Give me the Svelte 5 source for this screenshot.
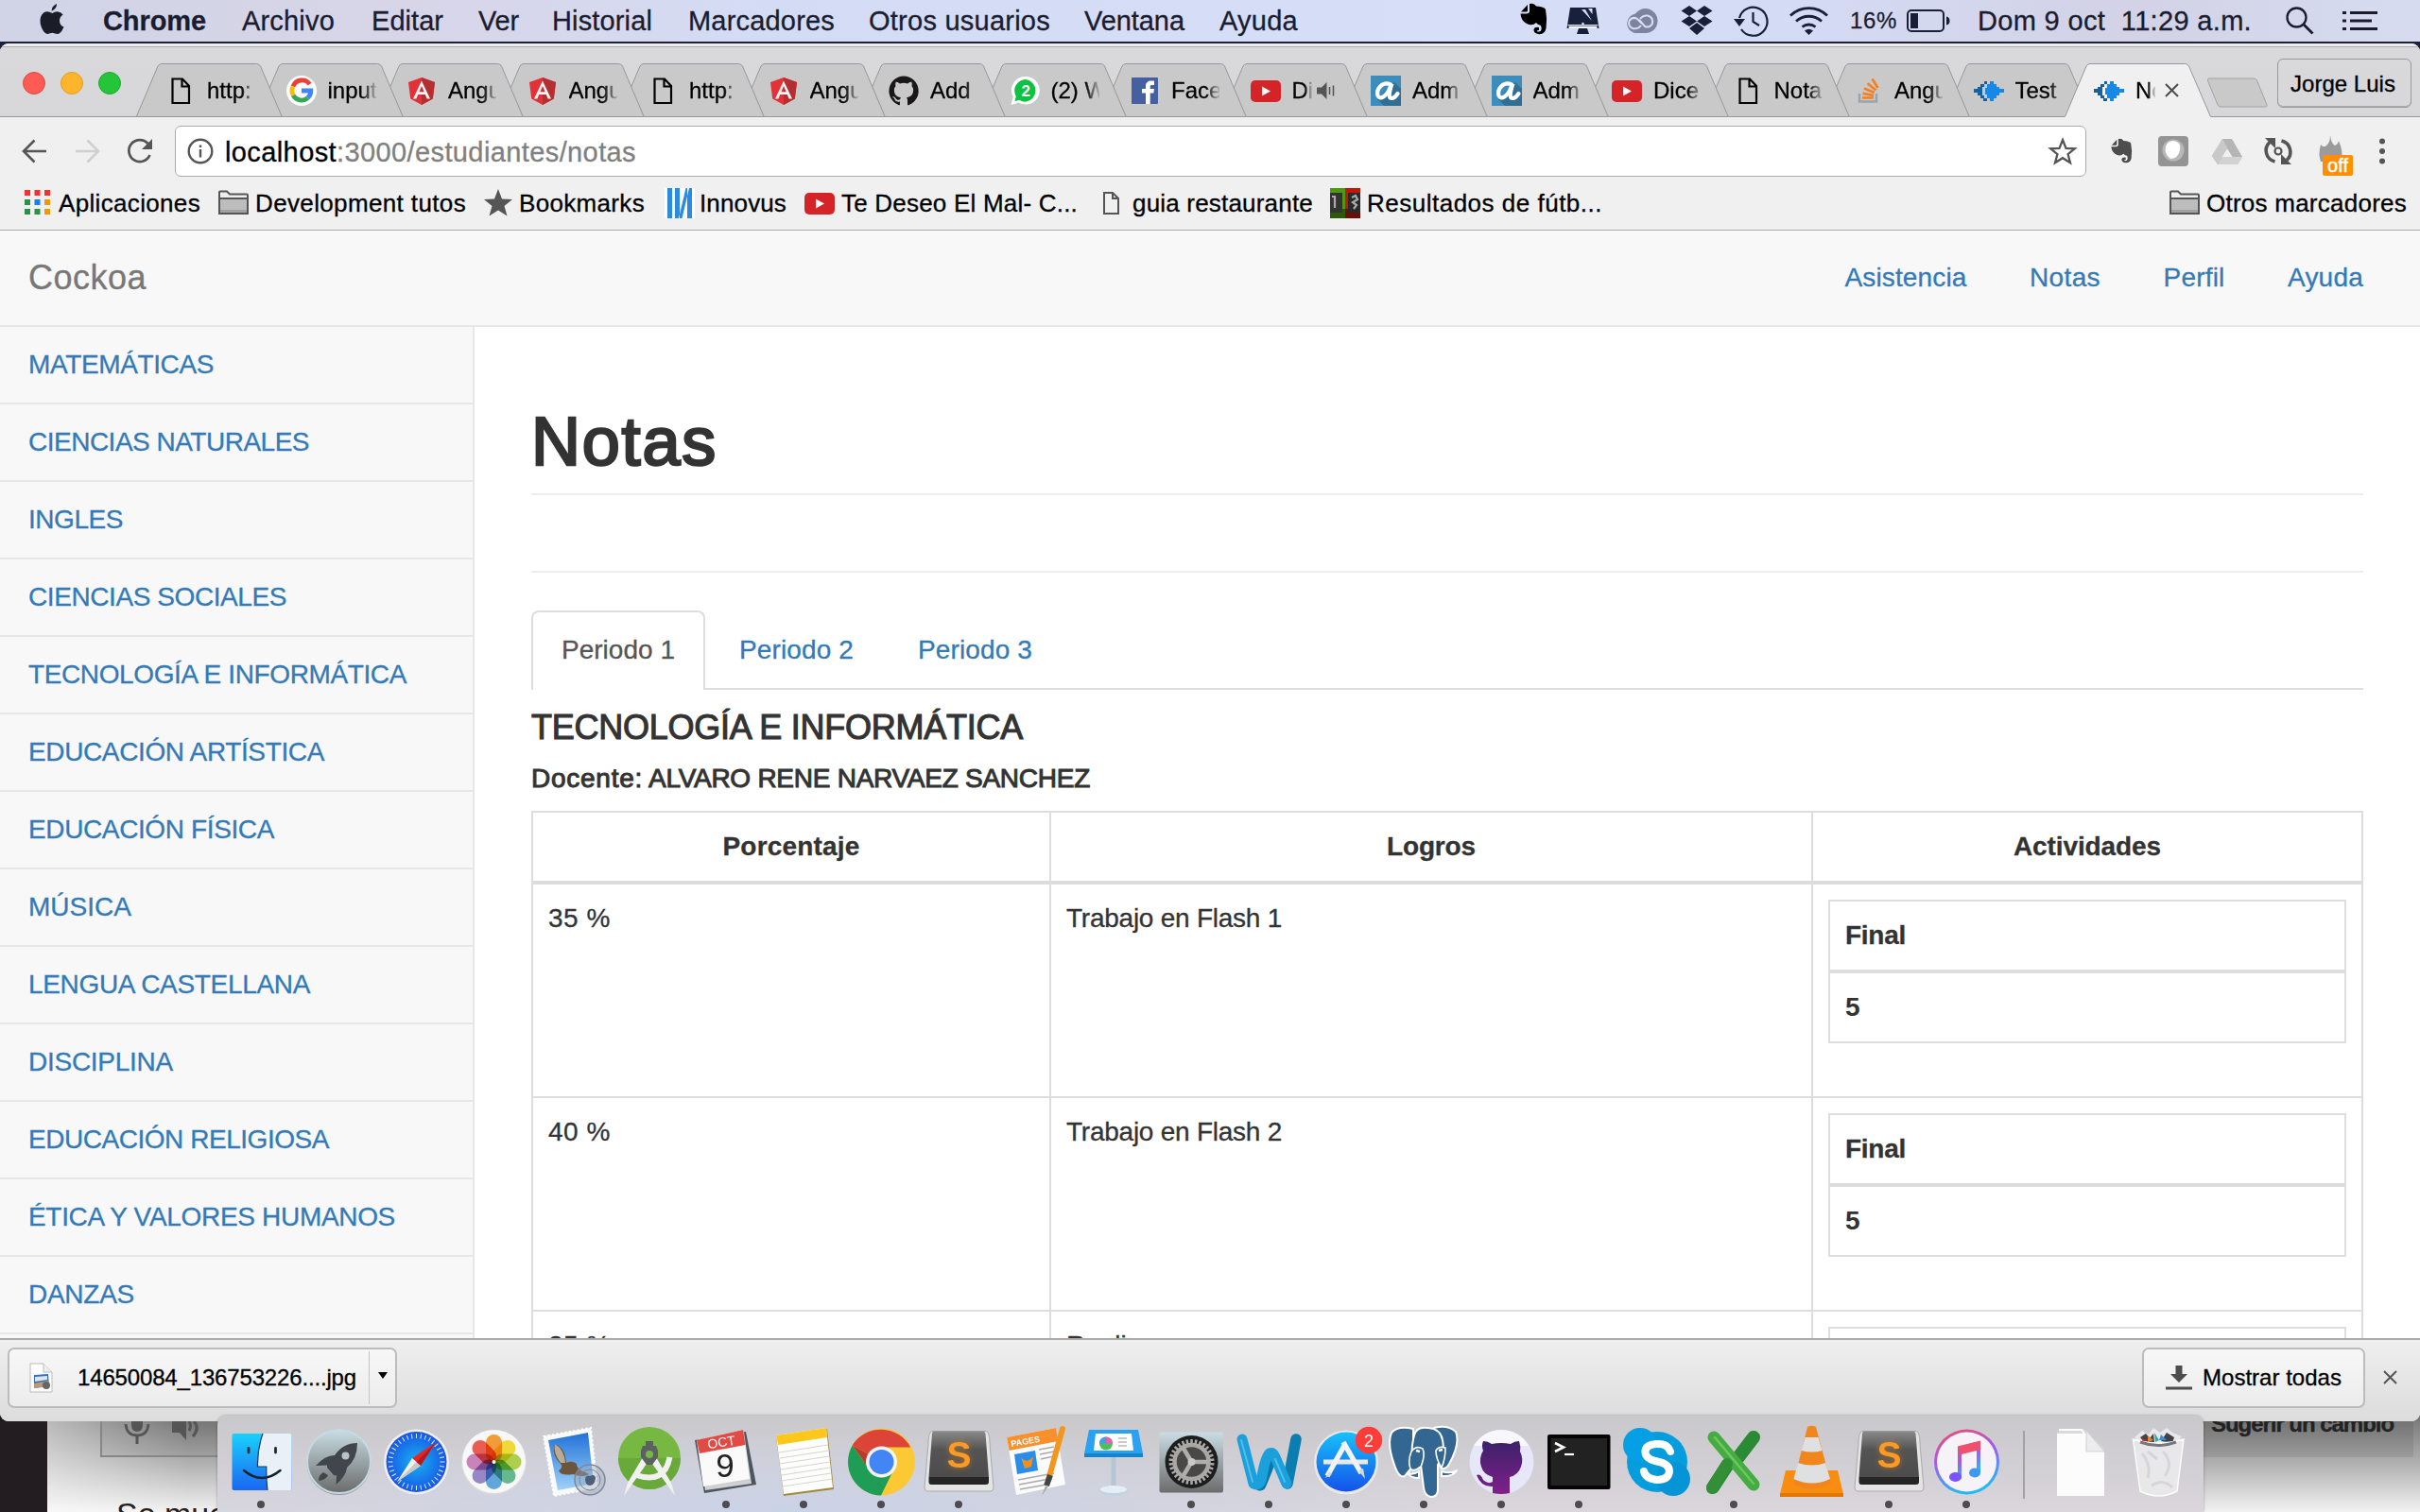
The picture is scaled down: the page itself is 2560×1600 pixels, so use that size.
<script>
  // Spreads the letters of a label so that it fills the given width.
  function fit(node, width) {
    const natural = node.getBoundingClientRect().width;
    const n = node.textContent.length;
    if (width && n) node.style.letterSpacing = `${((width - natural) / n).toFixed(3)}px`;
  }

  const menus = [
    ['Archivo', 98], ['Editar', 76], ['Ver', 43], ['Historial', 106], ['Marcadores', 155],
    ['Otros usuarios', 192], ['Ventana', 106], ['Ayuda', 83]
  ];

  const tabs = [
    ['page', 'http:'], ['google', 'input'], ['angular', 'Angul'], ['angular', 'Angul'], ['page', 'http:'],
    ['angular', 'Angul'], ['github', 'Add'], ['whatsapp', '(2) W'], ['facebook', 'Face'], ['youtube', 'Di'],
    ['adm', 'Adm'], ['adm', 'Adm'], ['youtube', 'Dice'], ['page', 'Nota'], ['stack', 'Angul'],
    ['test', 'Test'], ['test', 'No']
  ];

  const bookmarks = [
    ['apps', 'Aplicaciones', 150], ['folder', 'Development tutos', 223], ['star', 'Bookmarks', 133],
    ['innovus', 'Innovus', 92], ['youtube', 'Te Deseo El Mal- C...', 250], ['doc', 'guia restaurante', 191],
    ['futbol', 'Resultados de fútb...', 249]
  ];

  const subjects = [
    ['MATEMÁTICAS', 196], ['CIENCIAS NATURALES', 297], ['INGLES', 100], ['CIENCIAS SOCIALES', 273],
    ['TECNOLOGÍA E INFORMÁTICA', 400], ['EDUCACIÓN ARTÍSTICA', 313], ['EDUCACIÓN FÍSICA', 260],
    ['MÚSICA', 109], ['LENGUA CASTELLANA', 298], ['DISCIPLINA', 153], ['EDUCACIÓN RELIGIOSA', 318],
    ['ÉTICA Y VALORES HUMANOS', 388], ['DANZAS', 112], ['', 0]
  ];

  const links = [['Asistencia', 129], ['Notas', 75], ['Perfil', 65], ['Ayuda', 80]];

  const rows = [
    ['35 %', 'Trabajo en Flash 1', 228], ['40 %', 'Trabajo en Flash 2', 228], ['25 %', 'Realiza', 0]
  ];

  const apps = [
    ['finder', 1], ['launchpad', 0], ['safari', 0], ['photos', 0], ['mail', 0], ['studio', 0],
    ['calendar', 1], ['notes', 1], ['chrome', 1], ['sublime', 1], ['pages', 0], ['keynote', 0],
    ['prefs', 1], ['word', 1], ['appstore', 1], ['postgres', 1], ['octocat', 1], ['terminal', 1],
    ['skype', 0], ['excel', 1], ['vlc', 0], ['sublime', 1], ['itunes', 1]
  ];

  const petals = ['#f7941e', '#f4dc1c', '#a9cf38', '#55b582', '#4f9fdc', '#8d7cc4', '#c778b8', '#ee4b3c'];
  const spokes = Array.from({ length: 36 }, (_, i) => i * 10);
  const teeth = Array.from({ length: 30 }, (_, i) => i * 12);
</script>

{#snippet favicon(name)}
  <svg class="fav" viewBox="0 0 32 32">
    {#if name === 'page'}
      <path d="M7.5 3.5H18L25 11V29H7.5ZM17.5 4V11.500H25" fill="none" stroke="#000" stroke-width="2.200" />
    {:else if name === 'google'}
      <circle cx="16" cy="16" r="16" fill="#fff" />
      <g fill="none" stroke-width="4.800">
        <path d="M24.600 9.200A10 10 0 0 0 7 11.500" stroke="#ea4335" />
        <path d="M7 11.500A10 10 0 0 0 7.200 20.800" stroke="#fbbc05" />
        <path d="M7.200 20.800A10 10 0 0 0 22.500 23.600" stroke="#34a853" />
        <path d="M22.500 23.600A10 10 0 0 0 25.800 16H16" stroke="#4285f4" />
      </g>
    {:else if name === 'angular'}
      <path d="M16 2L30 7L27.800 24.500L16 31L4.200 24.500L2 7Z" fill="#e23237" />
      <path d="M16 2L30 7L27.800 24.500L16 31Z" fill="#b52e31" />
      <path d="M16 5.500L25 24.500H21.600L19.800 20H12.200L10.400 24.500H7ZM16 11L13.400 17.200H18.600Z" fill="#f2f2f2" fill-rule="evenodd" />
    {:else if name === 'github'}
      <path d="M16 .5A15.800 15.800 0 0 0 11 31.200C11.800 31.300 12 30.800 12 30.400V27.500C7.600 28.500 6.700 25.600 6.700 25.600C6 23.800 4.900 23.300 4.900 23.300C3.500 22.300 5 22.300 5 22.300C6.600 22.400 7.500 24 7.500 24C8.900 26.500 11.200 25.800 12.100 25.300C12.200 24.300 12.700 23.600 13.100 23.200C9.600 22.800 5.900 21.400 5.900 15.300C5.900 13.500 6.500 12.100 7.500 11C7.400 10.600 6.800 9 7.700 6.800C7.700 6.800 9.100 6.400 12 8.400A15 15 0 0 1 20 8.400C22.900 6.400 24.300 6.800 24.300 6.800C25.200 9 24.600 10.600 24.500 11C25.500 12.100 26.100 13.500 26.100 15.300C26.100 21.400 22.400 22.800 18.900 23.200C19.500 23.700 20 24.700 20 26.200V30.400C20 30.800 20.300 31.300 21.100 31.200A15.800 15.800 0 0 0 16 .5Z" fill="#191717" />
    {:else if name === 'whatsapp'}
      <path d="M17 1A14.500 14.500 0 0 1 17 30.500Q13 30.500 9.500 28.500L1.500 31L3.800 22.500A14.500 14.500 0 0 1 17 1Z" fill="#fff" />
      <path d="M17 4A12 12 0 0 1 17 27.800Q13 27.800 10 25.800L5.500 27.200L6.800 22A12 12 0 0 1 17 4Z" fill="#0dc143" />
      <text x="17.200" y="22" text-anchor="middle" class="bold" font-size="17" fill="#fff">2</text>
    {:else if name === 'facebook'}
      <rect x="2" y="2" width="28" height="28" rx="1" fill="#4460a0" />
      <path d="M17 30V18.500H13V14H17V11C17 7.500 19.500 5.600 23 5.600H26V10H24C22.300 10 21.700 10.600 21.700 12V14H26L25.300 18.500H21.700V30Z" fill="#fff" />
    {:else if name === 'youtube'}
      <rect x="0" y="5" width="32" height="23" rx="5" fill="#d42428" />
      <path d="M12 11.500L21 16.500L12 21.500Z" fill="#fff" />
    {:else if name === 'adm'}
      <rect width="32" height="32" fill="#3c8dbc" />
      <path d="M25 7L32 14V32H14L7 25Z" fill="#2f6f94" />
      <path d="M21 9.500C12 5.500 5.500 15 7.500 21C9.500 26.500 17 22 20.500 12.500L22.500 8.500C20.500 14 18 23.500 21.500 24C24.500 24.300 26.500 22 28.500 19" fill="none" stroke="#fff" stroke-width="4.200" stroke-linecap="round" />
    {:else if name === 'stack'}
      <path d="M7 19V27.500H25V19" fill="none" stroke="#9ba3ab" stroke-width="2.500" />
      <path d="M10 23.500H22M10.500 18.800L22 21M12 13.500L22.700 18M15.500 8.200L24.500 15.500M20.500 3.500L26.500 13" fill="none" stroke="#f48024" stroke-width="2.700" />
    {:else if name === 'test'}
      <path d="M17 6H21V9H24V12H27V14H32V18H27V21H24V24H21V27H17V24H14V20H12V13H14V9H17Z" fill="#1588e8" />
      <path d="M11 6H14V9H11V12H9V21H11V24H14V27H10V24H7V21H4V18H0V14H4V12H7V9H11Z" fill="#15609e" />
    {:else if name === 'apps'}
      <g>
        <path d="M1 2H7V8H1ZM11.500 2H17.500V8H11.500ZM22 2H28V8H22Z" fill="#f92f2f" />
        <path d="M1 12H7V18H1ZM1 22H7V28H1ZM11.500 22H17.500V28H11.500Z" fill="#2b9348" />
        <path d="M11.500 12H17.500V18H11.500Z" fill="#1a7cff" />
        <path d="M22 12H28V18H22ZM22 22H28V28H22Z" fill="#f29900" />
      </g>
    {:else if name === 'folder'}
      <path d="M1 27V4.500Q1 3.500 2 3.500H9L12 6.500H30Q31 6.500 31 7.500V27Z" fill="#eee" stroke="#555" stroke-width="2" />
      <path d="M1 11H31V27H1Z" fill="#bdbdbd" stroke="#555" stroke-width="2" />
      <path d="M2 23H30V26H2Z" fill="#a2a2a2" />
    {:else if name === 'star'}
      <path d="M15 1L19 11.500L30 12L21.500 19L24.500 29.500L15 23.500L5.500 29.500L8.500 19L0 12L11 11.500Z" fill="#555" />
    {:else if name === 'innovus'}
      <rect width="32" height="32" fill="#fff" />
      <path d="M3 0H8V32H3ZM11 0H16V32H11ZM24 0H29V32H24ZM15 32H18.500L26 0H22.500Z" fill="#2b8be0" />
    {:else if name === 'doc'}
      <path d="M2 5H11L17 11V27H2ZM11 5V11H17" fill="none" stroke="#555" stroke-width="2" />
    {:else if name === 'futbol'}
      <rect width="16" height="32" fill="#4c9a10" /><rect x="16" width="16" height="32" fill="#c0180c" />
      <rect y="22" width="16" height="10" fill="#2c5a08" /><rect x="16" y="22" width="16" height="10" fill="#6a0e08" />
      <rect y="5" width="13" height="21" fill="#333" /><rect x="19" y="5" width="13" height="21" fill="#2a2a2a" />
      <path d="M2 9H5V21M23 10L27 8L29 12L24 15L28 18L25 22" stroke="#aaa" stroke-width="2.200" fill="none" />
    {/if}
  </svg>
{/snippet}

{#snippet app(name)}
  <svg class="app" viewBox="0 0 82 84">
    {#if name === 'finder'}
      <rect x="10.500" y="13" width="63" height="60" rx="2" fill="url(#finderBlue)" />
      <path d="M43 13H72Q73.500 13 73.500 15V71Q73.500 73 72 73H48Q46.500 62 46.800 48H37.500Q37 30 43 13Z" fill="#e9f0f7" />
      <path d="M28 28.500V33M56.500 28.500V33" stroke="#1b2a3c" stroke-width="2.800" stroke-linecap="round" />
      <path d="M23 52Q42 68 61.500 52" fill="none" stroke="#12202e" stroke-width="2.500" stroke-linecap="round" />
      <path d="M43 13Q37 30 37.500 48H46.800Q46.500 62 48 73" fill="none" stroke="#1c3a5c" stroke-width="1.200" />
    {:else if name === 'launchpad'}
      <circle cx="41.500" cy="44" r="34" fill="#8e9698" /><circle cx="41.500" cy="42.500" r="33.500" fill="url(#steel)" stroke="#c4dbe2" stroke-width="2" />
      <path d="M61 23Q46 23 37 36Q27 36 17 47L29 46.500L29 49L36 57L39 57.500L38.500 67Q49 58 50 49Q61 40 61 23Z" fill="#40464b" />
      <circle cx="48.500" cy="36.500" r="4" fill="#b7c3c7" />
      <path d="M25 54Q19 58 20.500 63Q28 62 30 57Z" fill="#40464b" />
    {:else if name === 'safari'}
      <circle cx="41.500" cy="43" r="34.500" fill="#f1f1f3" /><circle cx="41.500" cy="43" r="32" fill="url(#ocean)" />
      {#each spokes as a (a)}<path d="M41.500 13V18" stroke="#d8eefc" stroke-width="1" transform="rotate({a} 41.500 43)" />{/each}
      <path d="M62 22L46 47L37 39Z" fill="#e8262a" /><path d="M21 64L46 47L37 39Z" fill="#f0f0f0" />
      <path d="M21 64L46 47L41.500 43Z" fill="#c8c8c8" /><path d="M62 22L46 47L41.500 43Z" fill="#b51a20" />
    {:else if name === 'photos'}
      <circle cx="41.500" cy="43.500" r="34.500" fill="#d9d9dc" /><circle cx="41.500" cy="42.500" r="33.500" fill="#f8f8f8" />
      {#each petals as c, i (i)}<rect class="petal" x="33" y="14" width="17" height="29" rx="8.500" fill={c} opacity=".88" transform="rotate({i * 45} 41.500 43)" />{/each}
      <circle cx="41.500" cy="43" r="2" fill="#fff" />
    {:else if name === 'mail'}
      <path d="M12 16L62 7L69 70L23 79Z" fill="#fafafa" stroke="#fff" stroke-width="2" stroke-dasharray="2.500 2" />
      <path d="M17 20L59 12L65 66L27 73Z" fill="url(#sky)" />
      <path d="M24 24Q35 28 36 44Q42 41 47 45Q46 50 56 54L60 56Q54 60 43 56Q30 58 28 52Q32 50 31 46Q20 36 24 24Z" fill="#6d553b" />
      <path d="M24 24Q34 30 35 44L30 44Q22 34 24 24Z" fill="#b9ab98" />
      <circle cx="61" cy="62" r="16" fill="#9fa8b866" stroke="#7f8794" stroke-width="1.500" /><circle cx="61" cy="62" r="11" fill="none" stroke="#7f8794" />
      <path d="M61 58Q66 55 67 60Q66 68 61 68Q56 68 56 61Q57 56 61 58Z" fill="#4e6078" />
    {:else if name === 'studio'}
      <circle cx="42" cy="39" r="33" fill="#77b843" /><path d="M9 39A33 33 0 0 0 75 39Z" fill="#69a93a" />
      <path d="M39 45L22 69L15 79L19 65L35 38ZM45 45L62 69L69 79L65 65L49 38Z" fill="#f1f1f1" />
      <path d="M28 57Q58 67 63.500 38" fill="none" stroke="#f1f1f1" stroke-width="6" />
      <path d="M38 21H46V26H49L51 31V38L45 46H39L33 38V31L35 26H38Z" fill="#5c6063" /><circle cx="42" cy="35" r="4" fill="#77b843" />
    {:else if name === 'calendar'}
      <path d="M8 20L62 11L73 67L18 76Z" fill="#4d565f" /><path d="M11 22L60 12L68 66L19 73Z" fill="#d0d0d0" />
      <path d="M10 20L59 9L66 61L17 69Z" fill="#fafafa" /><path d="M10 20L59 9L61.500 25L13 34Z" fill="#e24a45" />
      <text x="36" y="27" text-anchor="middle" font-size="14" fill="#fff" transform="rotate(-9 36 22)">OCT</text>
      <text x="40" y="59" text-anchor="middle" font-size="35" fill="#222">9</text>
    {:else if name === 'notes'}
      <path d="M12 16L66 8L73 72L20 79Z" fill="#a08a3a" /><path d="M12 15L65 7L72 70L20 77Z" fill="#fdfdfb" />
      <path d="M12 15L65 7L66 17L14 25Z" fill="#fdc71c" />
      <path d="M15 33L67 25M16 39L68 31M16 45L68 37M17 51L69 43M18 57L69 49M18 63L70 55M19 69L71 61" stroke="#d5d5d5" stroke-width="1.200" />
    {:else if name === 'chrome'}
      <circle cx="41.500" cy="43" r="35.500" fill="#fcc934" />
      <path d="M41.500 43L10.800 25.200A35.500 35.500 0 0 1 72.200 27.500L41.500 27.500Z" fill="#db4437" />
      <path d="M10.800 25.200A35.500 35.500 0 0 0 41 78.500L54.500 51L28.500 51Z" fill="#1f9d57" />
      <path d="M10.800 25.200L28.500 51L41.500 43Z" fill="#b93a2f" />
      <circle cx="41.500" cy="43" r="16.500" fill="#f5f5f5" /><circle cx="41.500" cy="43" r="13" fill="#4285f4" />
    {:else if name === 'sublime'}
      <path d="M9 24Q9 11 13 10.500H70Q74 11 74 24L78 70Q78 74 75 74H8Q5 74 5 70Z" fill="#e4e4e4" stroke="#aaa" />
      <path d="M13 13Q13 10.500 15 10.500H67Q69 10.500 69.500 13L73 59H9.500Z" fill="url(#slate)" />
      <path d="M9.500 59H73V64Q73 67 70 67H12Q9.500 67 9.500 64Z" fill="#252525" />
      <text x="41.500" y="49" text-anchor="middle" class="bold glow" font-size="39" fill="#fb9a24">S</text>
    {:else if name === 'pages'}
      <path d="M10 17L62 7L72 67L20 78Z" fill="#fbfbfb" /><path d="M10 17L62 7L64.500 21L12.500 31Z" fill="#f8902e" />
      <text x="15" y="27" class="bold" font-size="9" fill="#fff" transform="rotate(-10 15 27)">PAGES</text>
      <path d="M18 35L40 31L43 52L21 56Z" fill="#2a8ceb" /><path d="M25 38Q31 46 38 37L36 48L29 50Z" fill="#f4901a" />
      <path d="M44 30L60 27M45 35L60 32M46 40L60 37M22 62L60 55M23 67L55 61M24 72L52 67" stroke="#aaa" stroke-width="1.400" />
      <path d="M69 8L54 62" stroke="#f2961e" stroke-width="6" stroke-linecap="round" /><path d="M56 57L52 68" stroke="#444" stroke-width="6" /><path d="M51 68L47 79L54 69Z" fill="#aaa" />
    {:else if name === 'keynote'}
      <path d="M38.500 37H43.500V72H38.500Z" fill="#b7c6d4" /><ellipse cx="41" cy="73.500" rx="15" ry="5.500" fill="#c3d3e2" /><ellipse cx="41" cy="72" rx="14" ry="4" fill="#e6eef5" />
      <path d="M15 9H67L72 34H10Z" fill="#2aa1f2" /><path d="M10 34H72V38H10Z" fill="#1684cc" />
      <path d="M22 13H60L62 31H20Z" fill="#fff" /><circle cx="33" cy="23.500" r="7" fill="#4bc05a" /><path d="M33 23.500V16.500A7 7 0 0 1 40 23.500Z" fill="#ef5da8" /><path d="M33 23.500H26A7 7 0 0 1 33 16.500Z" fill="#3aa0ee" />
      <path d="M46 18H55M46 22H55M46 26H55" stroke="#b9b9b9" stroke-width="1.500" />
    {:else if name === 'prefs'}
      <rect x="7.500" y="11.500" width="67.500" height="64" rx="2" fill="url(#steel)" />
      <circle cx="41.500" cy="43" r="28" fill="#1d1d1d" />
      {#each teeth as a (a)}<path d="M41.500 19V25" stroke="#aaa" stroke-width="2.500" transform="rotate({a} 41.500 43)" />{/each}
      <circle cx="41.500" cy="43" r="18" fill="#4a4846" stroke="#aaa8a5" stroke-width="4.500" />
      <path d="M41.500 43H59M41.500 43L32.500 28M41.500 43L32.500 58" stroke="#b0aeab" stroke-width="4.500" /><circle cx="41.500" cy="43" r="4" fill="#c9c9c9" />
    {:else if name === 'word'}
      <path d="M43 39Q38 53 32 67" stroke="#0a76a8" stroke-width="13" stroke-linecap="round" fill="none" />
      <path d="M70 19L61 66" stroke="#0b7db0" stroke-width="11.500" stroke-linecap="round" />
      <path d="M13 19L25 66Q32 70 34 58Q38 36 42 34Q46 32 48 38L60 66" stroke="#1ba0dc" stroke-width="11" stroke-linecap="round" stroke-linejoin="round" fill="none" />
      <path d="M12 20L24 64M48 40L58 64" stroke="#52bdee" stroke-width="2" stroke-linecap="round" />
    {:else if name === 'appstore'}
      <circle cx="41" cy="43.500" r="34" fill="#e9e9ec" /><circle cx="41" cy="43" r="31.500" fill="url(#store)" />
      <path d="M17 43H64" stroke="#e9e9ec" stroke-width="5" /><path d="M40 24L21 58" stroke="#f3f3f3" stroke-width="5.500" /><path d="M38 22L57 55" stroke="#f3f3f3" stroke-width="5.500" />
      <path d="M23 53L19 60L26 56ZM54 52L61 61L59 50Z" fill="#d7d7d7" />
      <circle cx="65" cy="20" r="14.200" fill="#fc3d39" /><text x="65" y="26.500" text-anchor="middle" font-size="18" fill="#fff">2</text>
    {:else if name === 'postgres'}
      <g fill="#336791" stroke="#fff" stroke-width="2" stroke-linejoin="round">
        <path d="M30 8Q14 4 7 12Q2 24 10 46Q15 61 21 58L30 47Z" />
        <path d="M52 7Q66 3 75 11Q80 24 68 45Q65 51 60 50L52 38Z" />
        <path d="M60 53Q70 56 76 52Q72 59 60 58Z" /><path d="M36 53Q30 57 24 55Q27 60 36 60Z" />
        <path d="M31 15Q33 5 46 7Q59 8 61 20Q64 34 56 46V72Q56 80 49 80Q42 79 41 70L38 46Q24 42 31 15Z" />
        <path d="M28 32Q33 25 40 29Q43 36 38 48Q30 54 27 50Q24 42 28 32ZM64 28Q57 26 54 31Q54 40 60 49Q64 40 64 28Z" stroke-width="1.600" />
      </g>
      <path d="M33 31L37 32M57 31L61 30" stroke="#fff" stroke-width="2.500" />
    {:else if name === 'octocat'}
      <circle cx="41.500" cy="43" r="34" fill="#e6e8fa" /><path d="M41.500 9A34 34 0 0 1 70 26H12A34 34 0 0 1 41.500 9Z" fill="#f7f7fd" />
      <path d="M22 21Q27 21 31 24Q41 22 51 24Q55 21 60 21Q62 27 61 32Q65 40 62 48Q59 57 50 59V76Q41 78 32 76V69Q20 70 15 57Q19 55 22 62Q27 67 32 64V59Q22 56 20 48Q17 39 22 31Q20 26 22 21Z" fill="url(#plum)" />
    {:else if name === 'terminal'}
      <rect x="8" y="14" width="66.500" height="58" rx="2" fill="#050505" /><rect x="11.500" y="18" width="59.500" height="50" fill="#222" />
      <path d="M16 23L25 27.500L16 32" fill="none" stroke="#fff" stroke-width="2.600" /><path d="M26 35H36" stroke="#fff" stroke-width="2.200" />
    {:else if name === 'skype'}
      <circle cx="42" cy="43" r="32" fill="#069ddd" /><circle cx="24" cy="25" r="18" fill="#049fe4" /><circle cx="59" cy="61" r="18" fill="#0595d6" />
      <path d="M56 32Q53 23 41 24Q29 25 29.500 33Q30 40 42 42.500Q55 45 55 53Q54 62 42 62Q30 61 28 53" fill="none" stroke="#fff" stroke-width="8" stroke-linecap="round" />
    {:else if name === 'excel'}
      <path d="M62 17L46 38M34 47L19 70" stroke="#2b8a34" stroke-width="14" stroke-linecap="round" />
      <path d="M20 17L62 67" stroke="#46ab42" stroke-width="13" stroke-linecap="round" /><path d="M34 45L18 71" stroke="#328f35" stroke-width="12" stroke-linecap="round" />
      <path d="M21 17L62 66" stroke="#69c95f" stroke-width="2.500" stroke-linecap="round" />
    {:else if name === 'vlc'}
      <path d="M14 52H69L75 77V80H8V77Z" fill="#f98d10" /><path d="M8 76H75V80H8Z" fill="#e07706" />
      <path d="M37 6Q41 3.500 46 6L62 66Q42 77 22 66Z" fill="#f0861c" />
      <path d="M34.500 17H48.500L52.500 31Q42 34 30.500 31ZM27 44Q42 49 56 44L61 61Q42 70 22.500 61Z" fill="#dfe0e2" />
    {:else if name === 'itunes'}
      <circle cx="41.500" cy="43" r="34.500" fill="url(#tunes)" /><circle cx="41.500" cy="43" r="31.500" fill="#f6f3f8" />
      <path d="M34 60V28L54 23V54" fill="none" stroke="url(#tunes)" stroke-width="4" /><path d="M32 27L56 21V30L36 35Z" fill="#f0506e" />
      <ellipse cx="29.500" cy="59" rx="6.500" ry="5" fill="#7a54f5" /><ellipse cx="50" cy="54.500" rx="6" ry="5" fill="#3f98f0" />
    {:else if name === 'files'}
      <path d="M22 8H44L66 29V79H16V12Z" fill="#d9d9d9" /><path d="M16 13H47L66 33V79H16Z" fill="#fcfcfc" /><path d="M18 9H42L45 13" fill="none" stroke="#fff" stroke-width="2" />
      <path d="M47 10V32H66Z" fill="#ececec" stroke="#d2d2d2" />
    {:else if name === 'trash'}
      <path d="M16 17L24 10L31 14L36 7L43 12L50 7L56 12L66 16L60 24H22Z" fill="#e9e9ea" />
      <path d="M22 17L28 13L32 18L36 13L37 22H26ZM44 21L50 12L58 17L56 23Z" fill="#43434a" /><path d="M30 15L36 20L30 22Z" fill="#e9812f" /><path d="M44 14L50 20H42Z" fill="#3b8fd6" /><path d="M24 18L30 22H24Z" fill="#c83238" /><path d="M37 12L42 20L38 22Z" fill="#35a8a0" />
      <path d="M14.500 19Q41 27 68 19L61 74Q41 84 22 74Z" fill="#eaeaece0" stroke="#fbfbfb" stroke-width="1.500" />
      <path d="M22 22Q41 29 60 22" fill="none" stroke="#77777e" stroke-width="3" />
      <path d="M24 34Q34 46 30 60M46 32Q58 44 48 58M34 68Q46 60 56 70M30 32L40 40" stroke="#d6d6da" stroke-width="3" fill="none" />
    {/if}
  </svg>
{/snippet}

<svg class="defs" aria-hidden="true">
  <defs>
    <linearGradient id="finderBlue" x2="0" y2="1"><stop stop-color="#1ad1fd" /><stop offset="1" stop-color="#1a66f0" /></linearGradient>
    <linearGradient id="steel" x2="0" y2="1"><stop stop-color="#c9dde4" /><stop offset="1" stop-color="#6b6b6b" /></linearGradient>
    <radialGradient id="ocean"><stop stop-color="#14b4ee" /><stop offset="1" stop-color="#1a55e8" /></radialGradient>
    <linearGradient id="sky" x2="0" y2="1"><stop stop-color="#2272d8" /><stop offset="1" stop-color="#9fd2fa" /></linearGradient>
    <linearGradient id="slate" x2="0" y2="1"><stop stop-color="#8a8a8a" /><stop offset=".4" stop-color="#545454" /><stop offset="1" stop-color="#4c4c4c" /></linearGradient>
    <linearGradient id="store" x2="0" y2="1"><stop stop-color="#17c1fb" /><stop offset="1" stop-color="#1552ea" /></linearGradient>
    <linearGradient id="plum" x2="0" y2="1"><stop stop-color="#3b2069" /><stop offset="1" stop-color="#80208a" /></linearGradient>
    <linearGradient id="tunes" x2=".3" y2="1"><stop stop-color="#fb4a58" /><stop offset=".5" stop-color="#a05cf2" /><stop offset="1" stop-color="#24b8f6" /></linearGradient>
  </defs>
</svg>

<div class="screen">
  <header class="menubar">
    <nav class="menus">
      <svg class="apple" viewBox="0 0 26 32"><path d="M18 0Q18.500 5 12.500 7.800Q12.500 2.500 18 0ZM13.300 10Q15.500 8.300 18.500 8.300Q22.500 8.500 24.700 11.500Q21 13.800 21 18Q21 22.800 25.500 24.500Q22.500 32 18.700 32Q17 32 15.500 31.200Q13.200 30.300 11 31.200Q9.200 32 8 32Q4.500 31.500 1.700 24.500Q-1 16.500 2 12Q4 8.500 8 8.300Q10.500 8.500 13.300 10Z" fill="#1a1c28" /></svg>
      <b><span use:fit={109}>Chrome</span></b>
      {#each menus as [label, w] (label)}<div><span use:fit={w}>{label}</span></div>{/each}
    </nav>
    <div class="status">
      <svg width="28" height="33" viewBox="0 0 28 33"><path d="M8 1V7Q8 8.500 6.500 8.500H1L8 1ZM10 0Q15 -1 17 2.500Q26 3 27 6Q29 16 27.500 26Q26 33 19 32Q14 31 14.500 27Q15.500 24 20 25V28Q18 27.500 18 29Q19 30 21.500 29Q23.500 27 22 23Q18 22 17 20Q13 24 7 21Q1 18 .5 10.500H7Q10.500 10 10 7Z" fill="#000" /></svg>
      <svg width="35" height="28" viewBox="0 1 35 28"><path d="M4 1H31L34.500 23H.5Z" fill="#17213c" /><path d="M1.500 19.500H33.500" stroke="#d7def5" stroke-width="1.200" /><path d="M2.500 20.500H32.500V23H2.500Z" fill="#eef1fb" /><circle cx="17.500" cy="18" r="1.300" fill="#d7def5" /><path d="M11 29H24L22 23H13Z" fill="#17213c" /><path d="M16 3L27 15L20 3ZM23 2L27.500 8V2Z" fill="#d7def5" /></svg>
      <svg width="38" height="28" viewBox="0 0 38 28"><path d="M12 27H25A13 13 0 1 0 13 6.500A10.500 10.500 0 0 0 12 27Z" fill="#7d849d" /><path d="M17 13L23 20Q28 22 31 17Q32 10 26 8.500Q21 8 18 12M20 17L15 12Q10 9 6.500 14Q5 20 10 22Q16 23 19 19" fill="none" stroke="#d7def5" stroke-width="2" /></svg>
      <svg width="34" height="32" viewBox="0 0 34 32"><path d="M9 0L17 5.500L9 11L.5 5.500ZM25 0L33.500 5.500L25 11L17 5.500ZM9 11L17 16.500L9 22L.5 16.500ZM25 11L33.500 16.500L25 22L17 16.500ZM17 18L25 24L17 31L9 24Z" fill="#1a1f38" /></svg>
      <svg width="38" height="33" viewBox="0 0 38 33"><path d="M6 13A15 15 0 1 1 8 25M20.500 7V17L27 21" fill="none" stroke="#1a1f38" stroke-width="2.200" /><path d="M0 14H12L6 22Z" fill="#1a1f38" /></svg>
      <svg width="41" height="30" viewBox="0 0 41 30"><path d="M1 9.500A28 28 0 0 1 40 9.500M7 15.500A20 20 0 0 1 34 15.500M13.500 21.500A11 11 0 0 1 27.500 21.500" fill="none" stroke="#1a1f38" stroke-width="2.800" /><path d="M16 25.500Q20.500 22 25 25.500L20.500 30Z" fill="#1a1f38" /></svg>
      <div class="pct"><span use:fit={50}>16%</span></div>
      <svg width="46" height="24" viewBox="0 0 46 24"><rect x="1" y="1" width="38" height="22" rx="4" fill="none" stroke="#1a1f38" stroke-width="2" /><path d="M4 4H12V20H4Z" fill="#1a1f38" /><path d="M42 7.500Q45.500 8 45.500 12Q45.500 16 42 16.500Z" fill="#1a1f38" /></svg>
      <div class="clock"><span use:fit={290}>Dom 9 oct&nbsp; 11:29 a.m.</span></div>
      <svg width="30" height="30" viewBox="0 0 30 30"><circle cx="11.500" cy="11.500" r="10" fill="none" stroke="#1a1c2c" stroke-width="2.300" /><path d="M18.500 18.500L28.500 28.500" stroke="#1a1c2c" stroke-width="2.800" /></svg>
      <svg width="37" height="20" viewBox="0 0 37 20"><path d="M0 1.500H4M8 1.500H37M0 10H4M8 10H31M0 18.500H4M8 18.500H37" stroke="#1a1c2c" stroke-width="3" /></svg>
    </div>
  </header>

  <main class="window">
    <div class="tabstrip">
      <div class="lights"><i class="red"></i><i class="amber"></i><i class="green"></i></div>
      <div class="tabs">
        {#each tabs as [icon, label], i (i)}
          {@const active = i === tabs.length - 1}
          <div class="tab" class:active style:z-index={active ? 40 : 30 - i}>
            <svg class="shape" viewBox="0 0 155 57">
              {#if active}
                <path d="M0 57L.5 56L23 3Q24.500 .5 27 .5H127.500Q130 .5 131.500 3L154 56L155 57Z" fill="#f0f0f0" /><path d="M.5 56.500L23 3Q24.500 .5 27 .5H127.500Q130 .5 131.500 3L154.500 56.500" fill="none" stroke="#979797" />
              {:else}
                <path d="M.5 56L23 3Q24.500 .5 27 .5H127.500Q130 .5 131.500 3L154 56" fill="#c9c9c9" stroke="#979797" />
              {/if}
            </svg>
            {@render favicon(icon)}
            <span class="label" class:short={label === 'Di' || active}>{label}</span>
            {#if label === 'Di'}
              <svg class="sound" width="20" height="20" viewBox="0 0 20 20"><path d="M0 6.500H5L10.500 1V19L5 13.500H0Z" fill="#555" /><path d="M13.500 6V14M17.500 4.500V15.500" stroke="#555" stroke-width="1.600" /></svg>
            {:else if active}
              <svg class="close" width="15" height="15" viewBox="0 0 15 15"><path d="M1 1L14 14M14 1L1 14" stroke="#4c4c4c" stroke-width="2" /></svg>
            {/if}
          </div>
        {/each}
      </div>
      <svg class="newtab" viewBox="0 0 66 33"><path d="M3 1H50Q52.500 1 53.500 3L64 29Q64.500 31 62.500 31H15Q13 31 12 29L1.500 3.500Q1 1 3 1Z" fill="#c9c9c9" stroke="#a2a2a2" /></svg>
      <div class="profile"><span use:fit={111}>Jorge Luis</span></div>
    </div>

    <div class="toolbar">
      <svg width="27" height="26" viewBox="0 0 27 26"><path d="M26 13H2M13.500 1.500L2 13L13.500 24.500" fill="none" stroke="#555" stroke-width="2.600" /></svg>
      <svg width="27" height="26" viewBox="0 0 27 26"><path d="M1 13H25M13.500 1.500L25 13L13.500 24.500" fill="none" stroke="#d0d0d0" stroke-width="2.600" /></svg>
      <svg width="28" height="28" viewBox="1 0 28 28"><path d="M24.500 18A11.500 11.500 0 1 1 22.500 6" fill="none" stroke="#555" stroke-width="2.700" /><path d="M27 1V12H16Z" fill="#555" /></svg>
      <div class="address">
        <svg width="28" height="28" viewBox="0 0 28 28"><circle cx="14" cy="14" r="12.300" fill="none" stroke="#555" stroke-width="2.400" /><path d="M14 12V20.500M14 7.500V10" stroke="#555" stroke-width="2.400" /></svg>
        <span class="url" use:fit={435}>localhost<em>:3000/estudiantes/notas</em></span>
        <svg width="30" height="30" viewBox="1 0 30 30"><path d="M15 3L18.500 11.800L27.800 12.300L20.600 18.200L23 27.300L15 22.200L7 27.300L9.400 18.200L2.200 12.300L11.500 11.800Z" fill="none" stroke="#555" stroke-width="2.300" /></svg>
      </div>
      <div class="exts">
        <svg width="22" height="26" viewBox="0 0 28 33"><path d="M8 1V7Q8 8.500 6.500 8.500H1L8 1ZM10 0Q15 -1 17 2.500Q26 3 27 6Q29 16 27.500 26Q26 33 19 32Q14 31 14.500 27Q15.500 24 20 25V28Q18 27.500 18 29Q19 30 21.500 29Q23.500 27 22 23Q18 22 17 20Q13 24 7 21Q1 18 .5 10.500H7Q10.500 10 10 7Z" fill="#4d4d4d" /></svg>
        <svg width="32" height="32" viewBox="0 0 32 32"><rect width="32" height="32" rx="4" fill="#949494" /><circle cx="16" cy="15" r="11.500" fill="#b8b8b8" /><path d="M16 5Q25 6 23 15Q21 24 13 24Q6 19 8 11Q10 5 16 5Z" fill="#fff" /></svg>
        <svg width="32" height="28" viewBox="0 0 32 28"><path d="M11 1H21L32 20L27 28H6L0 19Z" fill="#b5b5b5" /><path d="M11 1L0 19L6 28L16 10Z" fill="#c9c9c9" /><path d="M16 11L21.500 20H10.500Z" fill="#f0f0f0" /><path d="M6 28L10.500 20H32L27 28Z" fill="#d2d2d2" /></svg>
        <svg width="30" height="30" viewBox="0 0 30 30"><path d="M11.500 26A12 12 0 0 1 6 5.500M18.500 4A12 12 0 0 1 24 24.500" fill="none" stroke="#555" stroke-width="3.600" /><path d="M1 1H12V12ZM29 29H18V18Z" fill="#555" /><circle cx="15" cy="15" r="3.500" fill="none" stroke="#555" stroke-width="2.200" /></svg>
        <div class="flame">
          <svg width="26" height="30" viewBox="0 0 26 30"><path d="M12 0Q13 9 17 11Q20 10 21 6Q26 17 24 28H2Q-1 20 2 10Q5 14 8 11Q12 8 12 0Z" fill="#9b9b9b" /></svg>
          <span class="off">off</span>
        </div>
        <svg width="6" height="28" viewBox="0 0 6 28"><circle cx="3" cy="3.500" r="3" fill="#555" /><circle cx="3" cy="14" r="3" fill="#555" /><circle cx="3" cy="24.500" r="3" fill="#555" /></svg>
      </div>
    </div>

    <div class="bookmarks">
      {#each bookmarks as [icon, label, w] (label)}
        <div class="bookmark {icon}">{@render favicon(icon)}<span use:fit={w}>{label}</span></div>
      {/each}
      <div class="bookmark folder">{@render favicon('folder')}<span use:fit={212}>Otros marcadores</span></div>
    </div>

    <section class="page">
      <nav class="navbar">
        <span class="brand" use:fit={125}>Cockoa</span>
        <div class="links">{#each links as [label, w] (label)}<a href="#top"><span use:fit={w}>{label}</span></a>{/each}</div>
      </nav>
      <div class="columns">
        <ul class="sidebar">
          {#each subjects as [label, w] (label)}<li><span use:fit={w}>{label}</span></li>{/each}
        </ul>
        <div class="content">
          <h1><span use:fit={197}>Notas</span></h1>
          <hr />
          <hr class="second" />
          <div class="periods">
            <div class="period on"><span use:fit={120}>Periodo 1</span></div>
            <div class="period"><span use:fit={121}>Periodo 2</span></div>
            <div class="period third"><span use:fit={121}>Periodo 3</span></div>
          </div>
          <h4><span use:fit={520}>TECNOLOGÍA E INFORMÁTICA</span></h4>
          <h5><span use:fit={118}>Docente:</span><span use:fit={467}>ALVARO RENE NARVAEZ SANCHEZ</span></h5>
          <table class="grades">
            <colgroup><col class="c1" /><col class="c2" /><col class="c3" /></colgroup>
            <thead><tr><th><span use:fit={145}>Porcentaje</span></th><th><span use:fit={94}>Logros</span></th><th><span use:fit={156}>Actividades</span></th></tr></thead>
            <tbody>
              {#each rows as [pct, goal, w] (goal)}
                <tr>
                  <td><span use:fit={66}>{pct}</span></td>
                  <td><span use:fit={w}>{goal}</span></td>
                  <td>
                    <table class="marks">
                      <thead><tr><th><span use:fit={64}>Final</span></th></tr></thead>
                      <tbody><tr><td><b>5</b></td></tr></tbody>
                    </table>
                  </td>
                </tr>
              {/each}
            </tbody>
          </table>
        </div>
      </div>
    </section>

    <footer class="downloads">
      <div class="file">
        <svg width="26" height="32" viewBox="0 0 26 32"><path d="M1 1H15L24 10V31H1Z" fill="#fff" stroke="#bbb" /><path d="M15 1V10H24" fill="#eee" stroke="#bbb" /><path d="M5 13L20 12L21 25L5 27Z" fill="#3b70b8" /><path d="M6 15L19 14V18L6 20Z" fill="#d9e6f2" /><path d="M5 22L20 19L21 25L5 27Z" fill="#b89a74" /><circle cx="18" cy="24" r="4" fill="#666" /></svg>
        <span class="name" use:fit={295}>14650084_136753226....jpg</span>
        <div class="more"><svg width="10" height="7" viewBox="0 0 10 7"><path d="M0 0H10L5 7Z" fill="#000" /></svg></div>
      </div>
      <div class="showall">
        <svg width="28" height="26" viewBox="0 0 28 26"><path d="M10.500 0H17.500V9H23L14 18L5 9H10.500ZM0 22.500H28V25.500H0Z" fill="#4d4d4d" /></svg>
        <span use:fit={147}>Mostrar todas</span>
      </div>
      <svg class="dismiss" width="15" height="15" viewBox="0 0 15 15"><path d="M1 1L14 14M14 1L1 14" stroke="#555" stroke-width="2" /></svg>
    </footer>
  </main>

  <div class="desktop">
    <div class="behind">
      <div class="tools">
        <svg width="28" height="24" viewBox="0 0 28 24"><path d="M8 0H20V4Q20 11 14 11Q8 11 8 4ZM12.500 14H15.500V24H12.500Z" fill="#555" /><path d="M2 3Q3 15 14 15Q25 15 26 3" fill="none" stroke="#555" stroke-width="2.800" /></svg>
        <svg width="30" height="20" viewBox="0 0 30 20"><path d="M0 0H8L15 -6V20L8 12H0Z" fill="#555" /><path d="M18 0Q21 5 18 10M23 0Q30 7 22 16" fill="none" stroke="#555" stroke-width="3" /></svg>
      </div>
      <div class="suggest"><span use:fit={193}>Sugerir un cambio</span></div>
      <div class="cut">Se mue</div>
    </div>
    <div class="dock">
      {#each apps as [name, running], i (i)}
        <div class="slot">{@render app(name)}<i class="dot" class:running></i></div>
      {/each}
      <div class="divider"></div>
      <div class="slot">{@render app('files')}</div>
      <div class="slot">{@render app('trash')}</div>
    </div>
  </div>
</div>

<style>
  :global(body) { margin: 0; overflow: hidden; }
  .screen { width: 2560px; height: 1600px; overflow: hidden; display: flex; flex-direction: column; background: #1a2138; font: 28px/40px 'Liberation Sans', Arial, sans-serif; color: #333; }
  .screen *, .screen { box-sizing: border-box; }
  span { white-space: nowrap; -webkit-text-stroke: .3px currentColor; }
  svg { flex: none; display: block; overflow: visible; }
  .defs { position: absolute; width: 0; height: 0; }
  .bold { font-weight: 700; }
  .glow { filter: drop-shadow(0 0 3px #f58a1688); }

  .menubar { height: 44px; flex: none; display: flex; justify-content: space-between; background: linear-gradient(90deg, #d0d4e6, #d8d5e8 17%, #d4dcf5 32%, #d6dff7 60%, #d4dbf4 74%, #d3d2e6 88%, #d6dcf0); color: #1a1c30; font-size: 29px; }
  .menus { display: grid; grid-template-columns: 67px 147px 137px 113px 78px 144px 191px 228px 143px 100px; padding-left: 42px; align-items: center; }
  .apple { width: 26px; height: 32px; position: relative; top: -2px; }
  .status { display: grid; grid-template-columns: 49px 60px 61px 56px 59px 64px 60px 76px 325px 60px 82px; align-items: center; }
  .status svg:nth-child(1) { margin-top: -4px; }
  .pct { font-size: 24px; padding-bottom: 1px; }
  .clock { margin-left: -1px; }

  .window { height: 1458px; margin-top: 2px; flex: none; display: flex; flex-direction: column; border-radius: 9px; overflow: hidden; background: #fff; position: relative; z-index: 2; }
  .tabstrip { height: 78px; flex: none; display: flex; background: linear-gradient(#ececec 3px, #adadad 3px, #adadad 4px, #d9d8db 4px, #d7d7da 77px, #979797 77px); }
  .lights { display: flex; gap: 16px; padding: 30px 0 0 24px; width: 144px; }
  .lights i { width: 24px; height: 24px; border-radius: 50%; border: 1px solid #e2463f; background: #fd5b54; }
  .lights .amber { background: #fdb52b; border-color: #e0a021; }
  .lights .green { background: #25c53a; border-color: #1cab2c; }
  .tabs { display: flex; padding-top: 21px; width: 2195px; }
  .tab { width: 155px; height: 57px; margin-right: -27.500px; flex: none; display: flex; align-items: center; position: relative; padding-left: 31px; font-size: 24px; color: #000; }
  .shape { position: absolute; left: 0; top: 0; width: 155px; height: 57px; }
  .fav { width: 32px; height: 32px; position: relative; }
  .label { position: relative; margin-left: 12px; width: 51px; overflow: hidden; line-height: 32px; padding-top: 1px; mask-image: linear-gradient(90deg, #000 36px, transparent 53px); }
  .label.short { width: 21px; mask-image: linear-gradient(90deg, #000 13px, transparent 22px); }
  .sound { position: relative; margin-left: 5px; }
  .close { position: relative; margin-left: 10px; }
  .newtab { width: 66px; height: 33px; margin: 36px 0 0 -5px; }
  .profile { width: 142px; height: 52px; margin: 16px 0 0 9px; border: 1px solid #999; border-radius: 6px; box-shadow: inset 0 -1px 0 #aaa; font-size: 24px; line-height: 52px; padding-left: 13px; color: #000; }

  .toolbar { height: 72px; flex: none; display: flex; align-items: center; background: #f0f0f0; padding-left: 23px; }
  .toolbar > svg { margin-right: 29px; }
  .toolbar > svg:nth-child(3) { margin-right: 22px; }
  .address { width: 2022px; height: 54px; border: 1.500px solid #ababab; border-radius: 6px; background: #fff; display: flex; align-items: center; padding: 0 8px 0 12px; }
  .url { margin-left: 12px; color: #000; margin-right: auto; line-height: 42px; padding-top: 2px; font-size: 29px; }
  .url em { font-style: normal; color: #808080; }
  .exts { display: grid; grid-template-columns: 50px 57px 55px 58px 64px 6px; align-items: center; margin-left: 26px; }
  .flame { position: relative; height: 34px; }
  .off { position: absolute; left: 4px; top: 21px; width: 32px; height: 22px; background: #fe8f00; border-radius: 2px; color: #fff; font-size: 20px; line-height: 22px; text-align: center; -webkit-text-stroke: .5px #fff; }
  .bookmarks { height: 48px; flex: none; display: grid; grid-template-columns: 206px 281px 191px 148px 315px 241px 888px auto; padding: 0 0 9px 25px; align-items: center; background: #f0f0f0; border-bottom: 1px solid #ababab; font-size: 26px; color: #000; }
  .bookmark { display: flex; align-items: center; gap: 7px; line-height: 38px; }
  .bookmark.apps, .bookmark.star, .bookmark.innovus { gap: 5px; }
  .bookmark.doc { gap: 0; }

  .page { height: 1172px; flex: none; overflow: hidden; display: flex; flex-direction: column; }
  .navbar { height: 102px; flex: none; display: flex; justify-content: space-between; align-items: center; padding: 0 60px 0 30px; background: #f8f8f8; border-bottom: 2px solid #e7e7e7; }
  .brand { font-size: 36px; color: #777; }
  .links { display: flex; gap: 66.500px; }
  .links a { text-decoration: none; color: #337ab7; }
  .columns { display: flex; align-items: flex-start; }
  .sidebar { width: 502px; flex: none; margin: 0; padding: 0; list-style: none; background: #f8f8f8; border-right: 2px solid #e7e7e7; }
  .sidebar li { height: 82px; padding: 20px 0 0 30px; border-bottom: 2px solid #e7e7e7; color: #337ab7; }
  .content { width: 1938px; margin-left: 60px; }
  h1, h4, h5 { margin: 0; font-weight: 400; white-space: nowrap; }
  h1 { font-size: 72px; line-height: 80px; padding-top: 81px; height: 176px; }
  h1 span { -webkit-text-stroke: 2.600px #333; }
  hr { margin: 0; border: 0; height: 2px; background: #eee; }
  .second { margin-top: 80px; }
  .periods { display: flex; gap: 4px; height: 84px; margin-top: 40px; border-bottom: 2px solid #ddd; }
  .period { height: 84px; padding: 22px 32px 0; color: #337ab7; }
  .on { width: 184px; border: 2px solid #ddd; border-bottom: 0; border-radius: 8px 8px 0 0; padding: 20px 30px 0; background: #fff; color: #555; }
  h4 { font-size: 36px; line-height: 40px; margin-top: 20px; }
  h4 span { -webkit-text-stroke: 1.100px #333; }
  h5 { font-size: 28px; line-height: 32px; margin-top: 18px; height: 50px; display: flex; gap: 6px; }
  h5 span { -webkit-text-stroke: 1px #333; }
  table { border-collapse: separate; border-spacing: 0; table-layout: fixed; border: solid #ddd; border-width: 2px 0 0 2px; }
  .grades { width: 1938px; }
  .c1 { width: 548px; }
  .c2 { width: 806px; }
  .c3 { width: 582px; }
  th, td { padding: 16px; border: solid #ddd; border-width: 0 2px 2px 0; vertical-align: top; text-align: left; height: 226px; }
  th { height: 76px; border-bottom-width: 4px; text-align: center; }
  .marks { width: 548px; }
  .marks th { text-align: left; }
  .marks td { height: 74px; }

  .downloads { height: 88px; flex: none; display: flex; align-items: flex-start; background: linear-gradient(#efefef, #dcdcdc); border-top: 2px solid #a9a9a9; padding: 8px 24px 0 8px; font-size: 24px; color: #000; }
  .file, .showall { height: 64px; border: 2px solid #bcbcbc; border-radius: 7px; background: linear-gradient(#f7f7f7, #ececec); display: flex; align-items: center; }
  .file { width: 412px; padding-left: 21px; }
  .name { margin-left: 25px; }
  .more { margin-left: 13px; height: 56px; border-left: 1px solid #c4c4c4; padding: 22px 0 0 9px; }
  .showall { width: 236px; margin-left: auto; padding-left: 23px; gap: 11px; }
  .dismiss { margin: 24px 0 0 19px; }

  .desktop { height: 96px; flex: none; position: relative; background: linear-gradient(90deg, #231d21, #3a2c31); padding-left: 50px; margin-top: 0; }
  .desktop::before { content: ''; position: absolute; left: 0; right: 0; top: -12px; height: 12px; background: linear-gradient(90deg, #1c191c 50px, #777 50px); }
  .behind { height: 96px; position: relative; background: linear-gradient(90deg, #fff7, #fff0 6%), linear-gradient(#7d7d7d, #b5b5b5 50%, #f2f2f2); }
  .tools { position: absolute; left: 56px; top: -10px; width: 130px; height: 48px; border: 2px solid #868686; background: #0000000c; display: flex; gap: 23px; padding: 8px 0 0 23px; }
  .suggest { position: absolute; left: 2280px; right: 7px; top: -9px; height: 47px; background: #00000014; font-size: 24px; font-weight: 700; line-height: 24px; padding-left: 9px; color: #222; }
  .cut { position: absolute; left: 73px; top: 78px; font-size: 34px; color: #222; }
  .dock { position: absolute; left: 230px; top: -6px; width: 2101px; height: 102px; display: flex; padding: 6px 0 0 5px; border-radius: 9px 9px 0 0; background: radial-gradient(ellipse 700px 90px at 600px 102px, #cad2e6, #cad2e600), linear-gradient(#c9c8cb, #dad6dc); box-shadow: 0 0 3px #0005; z-index: 3; }
  .slot { width: 82px; flex: none; display: flex; flex-direction: column; align-items: center; }
  .app { width: 82px; height: 84px; }
  .dot { width: 8px; height: 8px; border-radius: 50%; }
  .running { background: #4b4b50; }
  .divider { width: 2px; height: 72px; margin: 10px 18px 0 19px; background: #a2a0a5; }
  .petal { mix-blend-mode: multiply; }
</style>
